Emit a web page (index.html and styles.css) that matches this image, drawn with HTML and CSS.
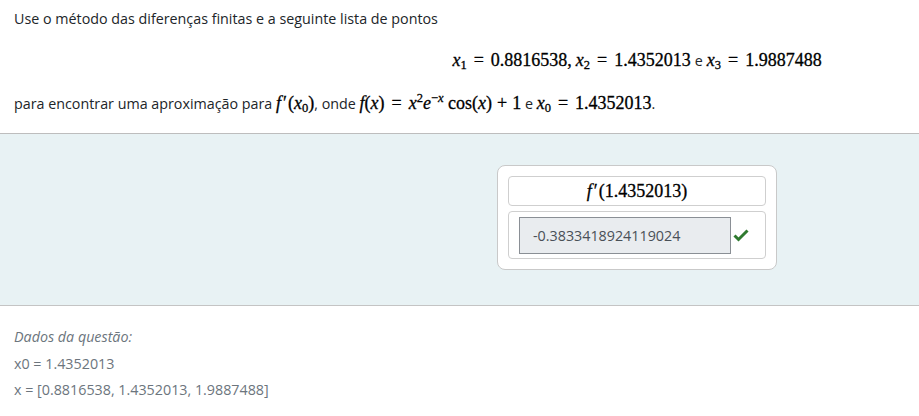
FILE: index.html
```html
<!DOCTYPE html>
<html lang="pt">
<head>
<meta charset="utf-8">
<title>Diferenças finitas</title>
<link rel="stylesheet" href="styles.css">
</head>
<body>
<div class="page">
  <section class="statement">
    <p class="line">Use o método das diferenças finitas e a seguinte lista de pontos</p>
    <div class="display">
      <span class="m"><i>x</i><sub>1</sub><span class="rel">=</span>0.8816538,</span>
      <span class="m"><i>x</i><sub>2</sub><span class="rel">=</span>1.4352013</span>
      <span class="t">e</span>
      <span class="m"><i>x</i><sub>3</sub><span class="rel">=</span>1.9887488</span>
    </div>
    <p class="line">para encontrar uma aproximação para <span class="m"><i>f</i><span class="pr">′</span>(<i>x</i><sub>0</sub>)</span>, onde <span class="m"><i>f</i>(<i>x</i>)<span class="rel">=</span><i>x</i><sup>2</sup><i>e</i><sup>−<i>x</i></sup> cos(<i>x</i>)<span class="bin">+</span>1</span> e <span class="m"><i>x</i><sub>0</sub><span class="rel">=</span>1.4352013</span>.</p>
  </section>
  <section class="answers">
    <div class="card">
      <div class="cell head"><span class="m"><i>f</i><span class="pr">′</span>(1.4352013)</span></div>
      <div class="cell body">
        <div class="field">-0.3833418924119024</div>
        <svg class="check" width="16" height="14" viewBox="0 0 16 14"><path d="M1.5 7.5 L5.5 11.5 L14.5 2.5" fill="none" stroke="#2f7a2f" stroke-width="3"/></svg>
      </div>
    </div>
  </section>
  <section class="data">
    <p class="dline title">Dados da questão:</p>
    <p class="dline">x0 = 1.4352013</p>
    <p class="dline">x = [0.8816538, 1.4352013, 1.9887488]</p>
  </section>
</div>
</body>
</html>
```

FILE: styles.css
```css
html, body {
  margin: 0;
  padding: 0;
  background: #fff;
}
.page {
  font-family: "Open Sans", "Noto Sans", sans-serif;
  font-size: 14.3px;
  color: #212529;
}
.statement {
  padding: 8px 14px 18px;
  border-bottom: 1px solid #bdbdbd;
}
.line {
  margin: 0;
  line-height: 22px;
}
.display {
  display: flex;
  justify-content: center;
  align-items: baseline;
  gap: 4px;
  padding-left: 355px;
  margin: 19px 0 20px;
  line-height: 22px;
}
.m {
  font-family: "Liberation Serif", serif;
  font-size: 18px;
  font-weight: normal;
  color: #000;
  -webkit-text-stroke: 0.3px #000;
}
.m i {
  font-style: italic;
}
.pr {
  margin-left: 2px;
  margin-right: 1px;
}
.m sub, .m sup {
  font-size: 12.5px;
  line-height: 0;
}
.m sub { vertical-align: -3px; }
.m sup { vertical-align: 7px; }
.rel { margin: 0 7px; }
.bin { margin: 0 5px; }
.answers {
  background: #e8f2f4;
  padding: 31px 0 35px 355px;
  display: flex;
  justify-content: center;
  border-bottom: 1px solid #c4c4c4;
}
.card {
  width: 280px;
  background: #fff;
  border: 1px solid #c9c9c9;
  border-radius: 8px;
  padding: 10px;
  box-sizing: border-box;
  display: flex;
  flex-direction: column;
  gap: 5px;
}
.cell {
  border: 1px solid #cfcfcf;
  border-radius: 4px;
}
.head {
  height: 30px;
  display: flex;
  align-items: center;
  justify-content: center;
  box-sizing: border-box;
}
.body {
  height: 48px;
  box-sizing: border-box;
  display: flex;
  align-items: center;
  padding-left: 10px;
  gap: 2px;
}
.field {
  width: 212px;
  height: 37px;
  box-sizing: border-box;
  border: 1px solid #8a8f95;
  background: #e9ecef;
  color: #495057;
  font-size: 14.3px;
  display: flex;
  align-items: center;
  padding-left: 13px;
}
.check { flex: none; }
.data {
  padding: 20px 14px;
  color: #6c757d;
}
.dline {
  margin: 0 0 4.5px;
  line-height: 22px;
}
.title { font-style: italic; }
```
